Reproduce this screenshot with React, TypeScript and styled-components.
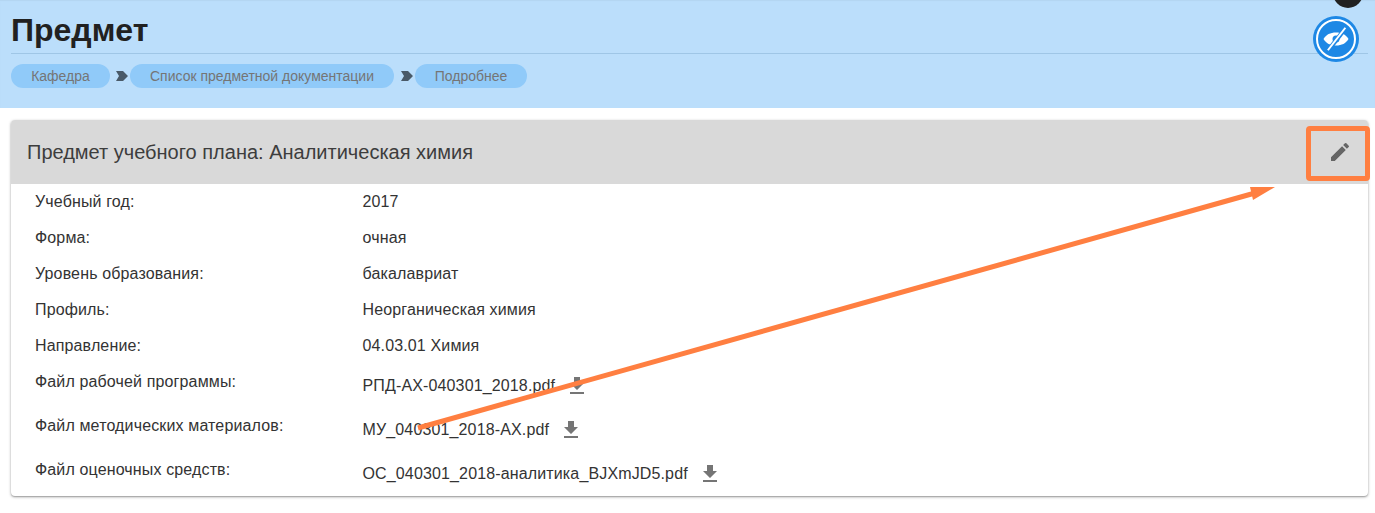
import React from "react";
import styled, { createGlobalStyle } from "styled-components";

const GlobalStyle = createGlobalStyle`
    html, body {
        margin: 0;
        padding: 0;
        background: #fff;
        font-family: "Liberation Sans", Arial, sans-serif;
    }
`;

type Row = { label: string; value: string; file?: boolean; height: number; labelTop?: number };

const rows: Row[] = [
    { label: "Учебный год:", value: "2017", height: 36 },
    { label: "Форма:", value: "очная", height: 36 },
    { label: "Уровень образования:", value: "бакалавриат", height: 36 },
    { label: "Профиль:", value: "Неорганическая химия", height: 36 },
    { label: "Направление:", value: "04.03.01 Химия", height: 36 },
    { label: "Файл рабочей программы:", value: "РПД-АХ-040301_2018.pdf", file: true, height: 44, labelTop: -4 },
    { label: "Файл методических материалов:", value: "МУ_040301_2018-АХ.pdf", file: true, height: 44, labelTop: -4 },
    { label: "Файл оценочных средств:", value: "ОС_040301_2018-аналитика_BJXmJD5.pdf", file: true, height: 44, labelTop: -4 },
];

const crumbs = ["Кафедра", "Список предметной документации", "Подробнее"];

const DownloadIcon = () => (
    <svg width="24" height="24" viewBox="0 0 24 24" fill="#757575">
        <path d="M19 9h-4V3H9v6H5l7 7 7-7zM5 18v2h14v-2H5z" />
    </svg>
);

const EditIcon = () => (
    <svg width="24" height="24" viewBox="0 0 24 24" fill="#666">
        <path d="M3 17.25V21h3.75L17.81 9.94l-3.75-3.75L3 17.25zM20.71 7.04a1 1 0 0 0 0-1.41l-2.34-2.34a1 1 0 0 0-1.41 0l-1.83 1.83 3.75 3.75 1.83-1.83z" />
    </svg>
);

const EyeOffIcon = () => (
    <svg width="30" height="30" viewBox="0 0 24 24">
        <path d="M2 12C4 8.500 7.500 6.800 12 6.800S20 8.500 22 12c-2 3.500-5.500 5.200-10 5.200S4 15.500 2 12z" fill="#fff" />
        <circle cx="12" cy="12" r="2.800" fill="#1e88e5" />
        <path d="M5.500 21.500L19.500 3.500" stroke="#1e88e5" strokeWidth="3.400" />
        <path d="M5.500 21L19.500 3" stroke="#fff" strokeWidth="1.600" />
    </svg>
);

const Page = styled.div`
    position: relative;
    width: 1375px;
    height: 513px;
    overflow: hidden;
    background: #fff;
`;

const Header = styled.header`
    height: 108px;
    box-sizing: border-box;
    padding: 0 7px 0 11px;
    background: #bbdefb;
    box-shadow: inset 0 1px 1px rgba(0, 0, 0, 0.04);
`;

const Title = styled.h1`
    margin: 0;
    height: 54px;
    box-sizing: border-box;
    padding-top: 11px;
    font-size: 32px;
    line-height: 38px;
    font-weight: 700;
    color: #212121;
    border-bottom: 1px solid #9fc6e6;
`;

const Crumbs = styled.nav`
    display: flex;
    align-items: center;
    margin-top: 10px;
`;

const Crumb = styled.span<{ $width: number }>`
    display: flex;
    align-items: center;
    justify-content: center;
    width: ${props => props.$width}px;
    height: 24px;
    border-radius: 12px;
    background: #90caf9;
    color: #757575;
    font-size: 14px;
`;

const CrumbArrow = styled.svg<{ $left: number }>`
    display: block;
    width: 12px;
    height: 10px;
    margin: 0 2px 0 ${props => props.$left}px;
`;

const Card = styled.section`
    margin: 12px 7px 0 11px;
    height: 376px;
    border-radius: 4px;
    overflow: hidden;
    background: #fff;
    box-shadow: 0 1px 3px rgba(0, 0, 0, 0.35), 0 1px 1px rgba(0, 0, 0, 0.14);
`;

const CardHead = styled.div`
    display: flex;
    align-items: center;
    justify-content: space-between;
    height: 64px;
    padding: 0 4px 0 16px;
    background: #d9d9d9;
`;

const CardTitle = styled.h2`
    margin: 0;
    font-size: 20px;
    font-weight: 400;
    color: #3d3d3d;
`;

const EditButton = styled.div`
    display: flex;
    align-items: center;
    justify-content: center;
    width: 48px;
    height: 48px;
`;

const RowList = styled.div`
    padding-left: 24px;
`;

const InfoRow = styled.div<{ $height: number }>`
    display: grid;
    grid-template-columns: 327.5px 1fr;
    align-items: center;
    height: ${props => props.$height}px;
    font-size: 16px;
    letter-spacing: 0.14px;
    color: #333;
`;

const Label = styled.span<{ $lift?: number }>`
    transform: translateY(${props => props.$lift ?? 0}px);
`;

const Value = styled.span`
    display: flex;
    align-items: center;
    gap: 10px;
`;

const FabDark = styled.div`
    position: absolute;
    left: 1333px;
    top: -22px;
    width: 30px;
    height: 30px;
    border-radius: 50%;
    background: #212121;
`;

const Fab = styled.div`
    position: absolute;
    left: 1313px;
    top: 16px;
    width: 46px;
    height: 46px;
    box-sizing: border-box;
    display: flex;
    align-items: center;
    justify-content: center;
    border-radius: 50%;
    background: #1e88e5;
    &::after {
        content: "";
        position: absolute;
        inset: 3px;
        border: 2px solid #fff;
        border-radius: 50%;
    }
`;

const Marker = styled.div`
    position: absolute;
    left: 1306px;
    top: 126px;
    width: 64px;
    height: 55px;
    box-sizing: border-box;
    border: 5px solid #ff7f41;
    border-radius: 4px;
`;

const ArrowOverlay = styled.svg`
    position: absolute;
    left: 0;
    top: 0;
    pointer-events: none;
`;

export default function App() {
    return (
        <Page>
            <GlobalStyle />
            <Header>
                <Title>Предмет</Title>
                <Crumbs>
                    {crumbs.map((crumb, i) => (
                        <React.Fragment key={crumb}>
                            {i > 0 && (
                                <CrumbArrow viewBox="0 0 12 10" $left={i === 1 ? 6 : 7}>
                                    <path d="M0 0h7l5 5-5 5H0l3-5z" fill="#4a5a68" />
                                </CrumbArrow>
                            )}
                            <Crumb $width={[99, 264, 112][i]}>{crumb}</Crumb>
                        </React.Fragment>
                    ))}
                </Crumbs>
            </Header>
            <Card>
                <CardHead>
                    <CardTitle>Предмет учебного плана: Аналитическая химия</CardTitle>
                    <EditButton>
                        <EditIcon />
                    </EditButton>
                </CardHead>
                <RowList>
                    {rows.map(row => (
                        <InfoRow key={row.label} $height={row.height}>
                            <Label $lift={row.labelTop}>{row.label}</Label>
                            <Value>
                                {row.value}
                                {row.file && <DownloadIcon />}
                            </Value>
                        </InfoRow>
                    ))}
                </RowList>
            </Card>
            <FabDark />
            <Fab>
                <EyeOffIcon />
            </Fab>
            <Marker />
            <ArrowOverlay width="1375" height="513" viewBox="0 0 1375 513">
                <path d="M418 428L1255 193" stroke="#ff7f41" strokeWidth="5" fill="none" />
                <path d="M1275 187L1250 187L1253 200z" fill="#ff7f41" />
            </ArrowOverlay>
        </Page>
    );
}
